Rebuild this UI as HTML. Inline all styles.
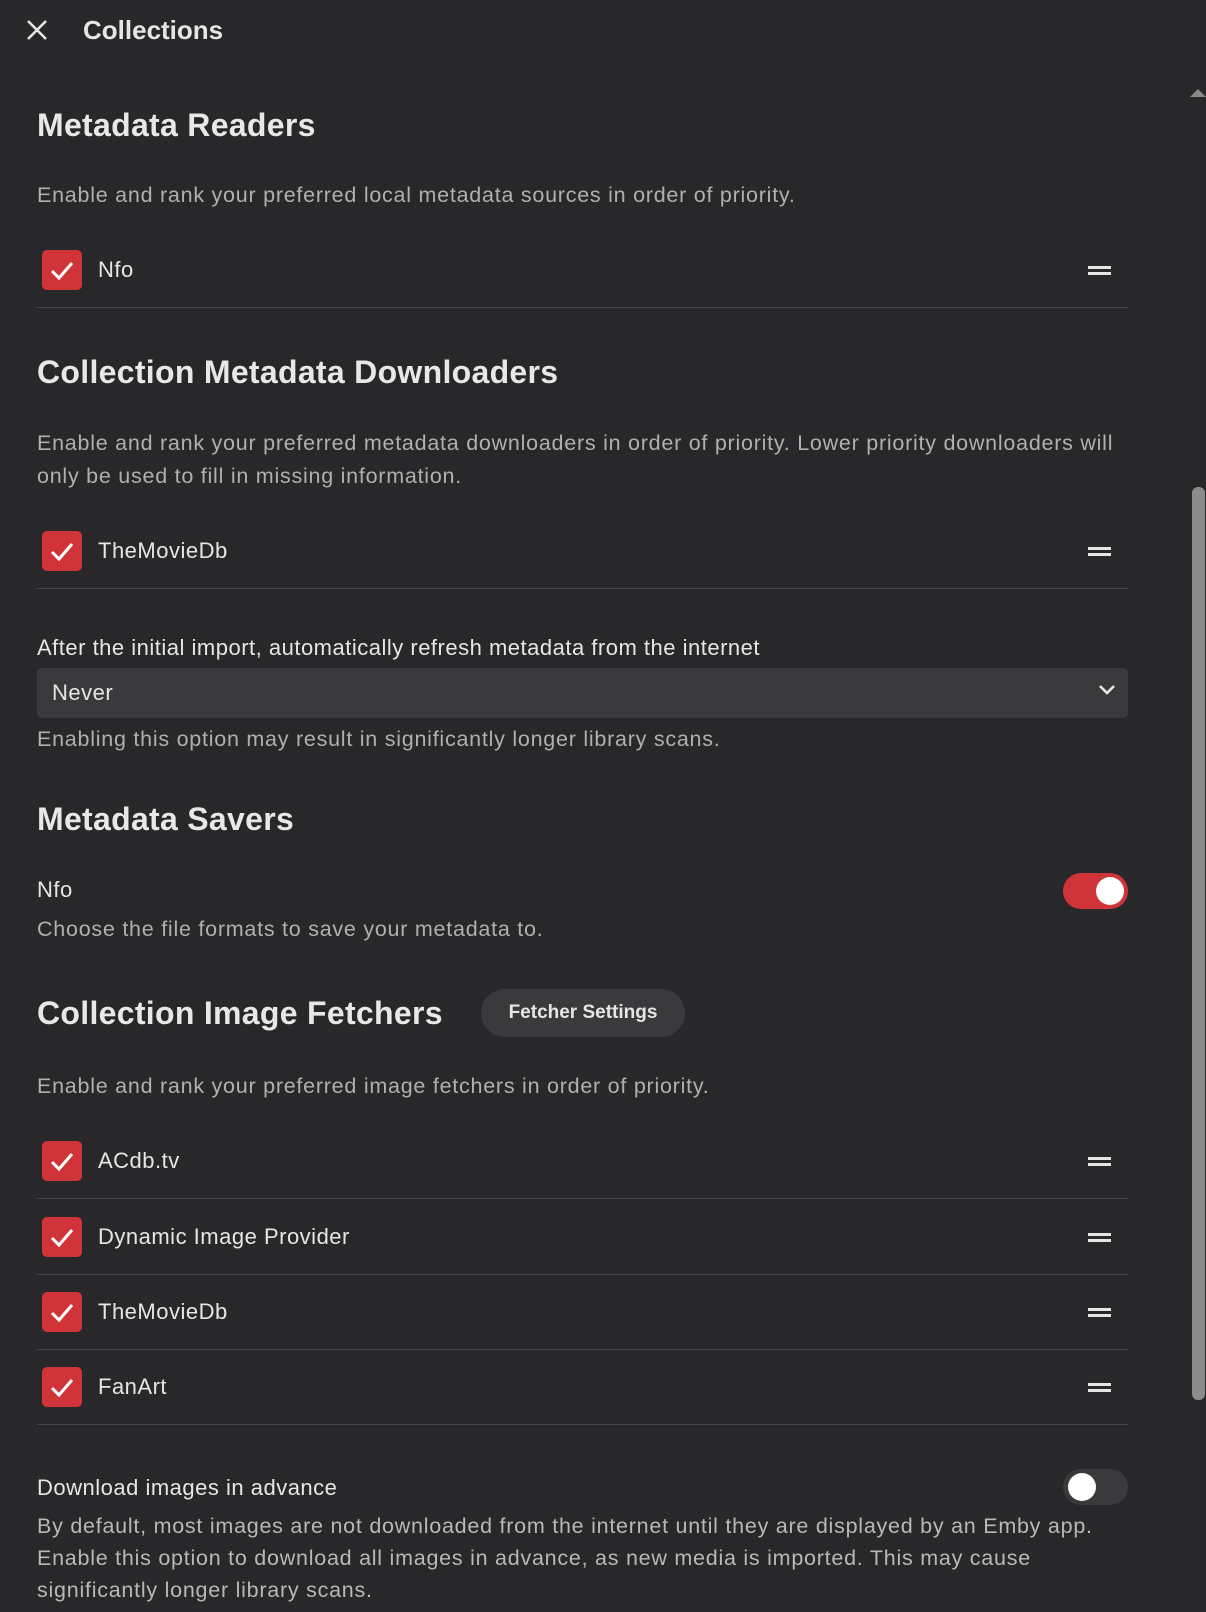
<!DOCTYPE html>
<html><head><meta charset="utf-8"><style>
*{margin:0;padding:0;box-sizing:border-box}
body{width:1206px;height:1612px;background:#28282a;font-family:"Liberation Sans",sans-serif;color:#e6e6e6;position:relative;overflow:hidden}
.a{position:absolute;white-space:nowrap}
.t{height:30px;line-height:30px}
.h{font-size:32px;font-weight:bold;height:40px;line-height:40px;color:#e8e8e8;letter-spacing:0.3px}
.d{font-size:21.5px;color:#b0b0b0;letter-spacing:0.75px}
.l{font-size:22px;color:#e6e6e6;letter-spacing:0.5px}
.ln{position:absolute;left:37px;width:1091px;height:1px;background:#454547}
.cb{position:absolute;left:42px;width:40px;height:40px;border-radius:5px;background:#d13438}
.cb svg{position:absolute;left:0;top:0}
.dr{position:absolute;left:1088px;width:23px;height:9px;border-top:3px solid #e6e6e6;border-bottom:3px solid #e6e6e6}
.tg{position:absolute;left:1063px;width:65px;height:36px;border-radius:18px}
.tg i{position:absolute;top:4px;width:28px;height:28px;border-radius:50%;background:#fff}
</style></head><body>
<svg class="a" style="left:26px;top:19px" width="22" height="22" viewBox="0 0 22 22"><path d="M2 2L20 20M20 2L2 20" stroke="#e6e6e6" stroke-width="2.6"/></svg>
<div class="a t" style="left:83px;top:15px;font-size:26px;font-weight:bold;line-height:30px">Collections</div>
<svg class="a" style="left:1190px;top:89px" width="16" height="9"><path d="M0 8L8 0L16 8Z" fill="#8a8a8a"/></svg>
<div class="a" style="left:1192px;top:487px;width:13px;height:913px;border-radius:6px;background:#8c8c8c"></div>

<div class="a h" style="left:37px;top:105px">Metadata Readers</div>
<div class="a t d" style="left:37px;top:180px">Enable and rank your preferred local metadata sources in order of priority.</div>
<div class="cb" style="top:250px"><svg width="40" height="40"><path d="M10 21L17 28L30 13" stroke="#fff" stroke-width="3" fill="none"/></svg></div>
<div class="a t l" style="left:98px;top:255px">Nfo</div>
<div class="dr" style="top:266px"></div>
<div class="ln" style="top:307px"></div>

<div class="a h" style="left:37px;top:352px">Collection Metadata Downloaders</div>
<div class="a t d" style="left:37px;top:428px">Enable and rank your preferred metadata downloaders in order of priority. Lower priority downloaders will</div>
<div class="a t d" style="left:37px;top:461px">only be used to fill in missing information.</div>
<div class="cb" style="top:531px"><svg width="40" height="40"><path d="M10 21L17 28L30 13" stroke="#fff" stroke-width="3" fill="none"/></svg></div>
<div class="a t l" style="left:98px;top:536px">TheMovieDb</div>
<div class="dr" style="top:547px"></div>
<div class="ln" style="top:588px"></div>

<div class="a t l" style="left:37px;top:633px">After the initial import, automatically refresh metadata from the internet</div>
<div class="a" style="left:37px;top:668px;width:1091px;height:50px;border-radius:5px;background:#3a3a3d"></div>
<div class="a t l" style="left:52px;top:678px">Never</div>
<svg class="a" style="left:1098px;top:684px" width="18" height="12"><path d="M2 2L9 9L16 2" stroke="#e6e6e6" stroke-width="2.6" fill="none"/></svg>
<div class="a t d" style="left:37px;top:724px">Enabling this option may result in significantly longer library scans.</div>

<div class="a h" style="left:37px;top:799px">Metadata Savers</div>
<div class="a t l" style="left:37px;top:875px">Nfo</div>
<div class="tg" style="top:873px;background:#d13438"><i style="left:33px"></i></div>
<div class="a t d" style="left:37px;top:914px">Choose the file formats to save your metadata to.</div>

<div class="a h" style="left:37px;top:993px">Collection Image Fetchers</div>
<div class="a" style="left:481px;top:989px;width:204px;height:48px;border-radius:24px;background:#3a3a3d;font-size:19px;font-weight:bold;line-height:48px;text-align:center;color:#e6e6e6">Fetcher Settings</div>
<div class="a t d" style="left:37px;top:1071px">Enable and rank your preferred image fetchers in order of priority.</div>

<div class="cb" style="top:1141px"><svg width="40" height="40"><path d="M10 21L17 28L30 13" stroke="#fff" stroke-width="3" fill="none"/></svg></div>
<div class="a t l" style="left:98px;top:1146px">ACdb.tv</div>
<div class="dr" style="top:1157px"></div>
<div class="ln" style="top:1198px"></div>
<div class="cb" style="top:1217px"><svg width="40" height="40"><path d="M10 21L17 28L30 13" stroke="#fff" stroke-width="3" fill="none"/></svg></div>
<div class="a t l" style="left:98px;top:1222px">Dynamic Image Provider</div>
<div class="dr" style="top:1233px"></div>
<div class="ln" style="top:1274px"></div>
<div class="cb" style="top:1292px"><svg width="40" height="40"><path d="M10 21L17 28L30 13" stroke="#fff" stroke-width="3" fill="none"/></svg></div>
<div class="a t l" style="left:98px;top:1297px">TheMovieDb</div>
<div class="dr" style="top:1308px"></div>
<div class="ln" style="top:1349px"></div>
<div class="cb" style="top:1367px"><svg width="40" height="40"><path d="M10 21L17 28L30 13" stroke="#fff" stroke-width="3" fill="none"/></svg></div>
<div class="a t l" style="left:98px;top:1372px">FanArt</div>
<div class="dr" style="top:1383px"></div>
<div class="ln" style="top:1424px"></div>

<div class="a t l" style="left:37px;top:1473px">Download images in advance</div>
<div class="tg" style="top:1469px;background:#3a3a3d"><i style="left:5px"></i></div>
<div class="a t d" style="left:37px;top:1511px;color:#b8b8b8">By default, most images are not downloaded from the internet until they are displayed by an Emby app.</div>
<div class="a t d" style="left:37px;top:1543px;color:#b8b8b8">Enable this option to download all images in advance, as new media is imported. This may cause</div>
<div class="a t d" style="left:37px;top:1575px;color:#b8b8b8">significantly longer library scans.</div>
</body></html>
